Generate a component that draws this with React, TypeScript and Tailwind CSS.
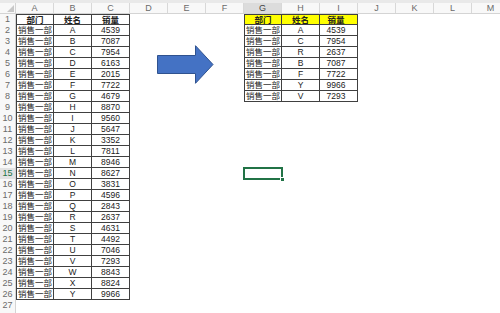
import React from 'react';

const COLS = ['A', 'B', 'C', 'D', 'E', 'F', 'G', 'H', 'I', 'J', 'K', 'L', 'M'];

const leftData: [string, number][] = [
  ['A', 4539], ['B', 7087], ['C', 7954], ['D', 6163], ['E', 2015],
  ['F', 7722], ['G', 4679], ['H', 8870], ['I', 9560], ['J', 5647],
  ['K', 3352], ['L', 7811], ['M', 8946], ['N', 8627], ['O', 3831],
  ['P', 4596], ['Q', 2843], ['R', 2637], ['S', 4631], ['T', 4492],
  ['U', 7046], ['V', 7293], ['W', 8843], ['X', 8824], ['Y', 9966],
];

const rightData: [string, number][] = [
  ['A', 4539], ['C', 7954], ['R', 2637], ['B', 7087],
  ['F', 7722], ['Y', 9966], ['V', 7293],
];

const SEL_ROW = 15;
const SEL_COL = 6;

// what goes in a cell, null when the cell is outside both tables
function cellInfo(r: number, c: number) {
  let table: [string, number][] | null = null;
  let first = 0;
  if (c <= 2 && r <= 26) table = leftData;
  if (c >= 6 && c <= 8 && r <= 8) {
    table = rightData;
    first = 6;
  }
  if (!table) return null;
  const k = c - first;
  if (r === 1) return { text: ['部门', '姓名', '销量'][k], k, header: true, right: first === 6 };
  const row = table[r - 2];
  return { text: k === 0 ? '销售一部' : k === 1 ? row[0] : String(row[1]), k, header: false, right: first === 6 };
}

const Cell: React.FC<{ r: number; c: number }> = ({ r, c }) => {
  const info = cellInfo(r, c);
  const selected = r === SEL_ROW && c === SEL_COL;
  if (!info) {
    return (
      <div className="relative w-[38px] shrink-0 h-full">
        {selected && (
          <>
            <div className="absolute -top-px -left-px -right-px -bottom-px border-2 border-[#217346]" />
            <div className="absolute -right-[3px] -bottom-[3px] w-[5px] h-[5px] bg-[#217346] border border-white" />
          </>
        )}
      </div>
    );
  }
  return (
    <div
      className={
        'w-[38px] shrink-0 h-full overflow-hidden whitespace-nowrap border-r border-b border-[#404040] leading-[10px] text-[#222] ' +
        (r === 1 ? 'border-t font-bold ' : '') +
        (info.k === 0 ? 'border-l ' : '') +
        (info.header && info.right ? 'bg-[#ffff00] ' : '') +
        (info.k === 0 && !info.header ? 'text-left text-[8.5px] pl-px ' : info.header ? 'text-center text-[8.5px] ' : 'text-center text-[8.5px] ') +
        (info.k === 2 && info.right ? 'pr-[5px] ' : '')
      }
    >
      {info.text}
    </div>
  );
};

export default function App() {
  const rows = Array.from({ length: 27 }, (_, i) => i + 1);
  return (
    <div className="w-[500px] h-[313px] overflow-hidden bg-white font-['Liberation_Sans','Noto_Sans_CJK_SC',sans-serif]">
      <div className="h-[3px] bg-[#e9e9e9]" />
      {/* column letters */}
      <div className="flex h-[11px] border-b border-[#d4d4d4] bg-[#f8f8f8]">
        <div className="relative w-[16px] shrink-0 border-r border-[#d4d4d4]">
          <div className="absolute right-[1px] bottom-[1px] w-0 h-0 border-l-[7px] border-l-transparent border-b-[7px] border-b-[#c8c8c8]" />
        </div>
        {COLS.map((col, i) => (
          <div
            key={col}
            className={
              'w-[38px] shrink-0 border-r border-[#d8d8d8] text-center text-[9px] leading-[10px] ' +
              (i === SEL_COL ? 'bg-[#dcdcdc] text-[#444]' : 'text-[#6b6b6b]')
            }
          >
            {col}
          </div>
        ))}
      </div>
      {rows.map((r) => (
        <div key={r} className="flex h-[11px]">
          <div
            className={
              'w-[16px] shrink-0 border-r border-[#d4d4d4] text-center text-[9px] leading-[11px] ' +
              (r === SEL_ROW ? 'bg-[#e2e2e2] text-[#217346]' : 'bg-[#f8f8f8] text-[#6b6b6b]')
            }
          >
            {r}
          </div>
          {COLS.map((col, c) => (
            <Cell key={col} r={r} c={c} />
          ))}
        </div>
      ))}
      <div className="flex h-[11px]">
        <div className="w-[16px] shrink-0 border-r border-[#d4d4d4] bg-[#f8f8f8]" />
      </div>
      {/* the arrow shape floats over the sheet */}
      <svg className="absolute left-[157px] top-[45px]" width="57" height="39" viewBox="0 0 57 39">
        <path d="M0.5 10.5 H38.5 V0.7 L56 19.5 L38.5 38.3 V28.5 H0.5 Z" fill="#4472c4" stroke="#2f528f" strokeWidth="1" />
      </svg>
    </div>
  );
}
